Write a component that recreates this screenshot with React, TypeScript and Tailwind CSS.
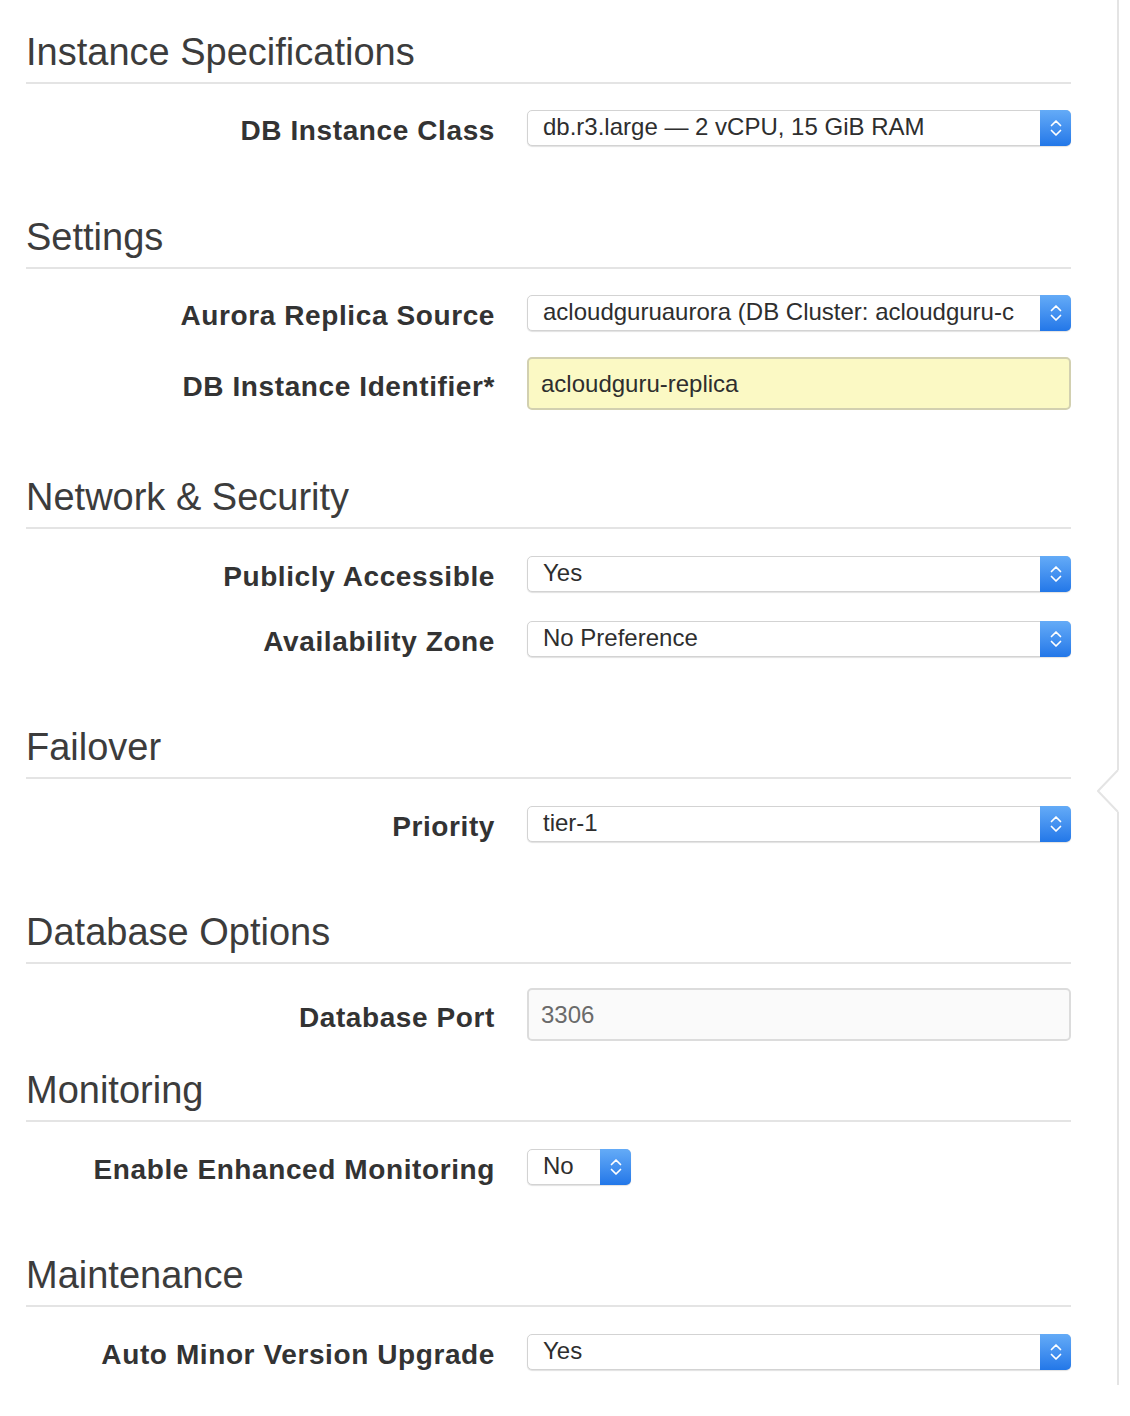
import React from "react";

const font = "font-['Liberation_Sans',Arial,Helvetica,sans-serif]";

function Header({ title, mt }: { title: string; mt: string }) {
  return (
    <div className={`${mt} border-b-2 border-[#e4e4e4] pb-[10px]`}>
      <h2 className="text-[38px] leading-[40px] font-normal text-[#3c3c3c]">{title}</h2>
    </div>
  );
}

function Stepper() {
  return (
    <div className="-my-px -mr-px flex w-[31px] items-center justify-center self-stretch rounded-r-[5px] bg-linear-to-b from-[#64abf7] to-[#2277e8]">
      <svg width="14" height="24" viewBox="0 0 14 24" fill="none">
        <path d="M2.5 9.5 L7 5 L11.5 9.5" stroke="white" strokeWidth="1.7" strokeLinecap="round" strokeLinejoin="round" />
        <path d="M2.5 14.5 L7 19 L11.5 14.5" stroke="white" strokeWidth="1.7" strokeLinecap="round" strokeLinejoin="round" />
      </svg>
    </div>
  );
}

function Select({ value, small }: { value: string; small?: boolean }) {
  return (
    <div
      className={`flex h-[36px] items-stretch rounded-[5px] border border-[#d3d3d3] bg-white shadow-[0_1px_1px_rgba(0,0,0,0.12)] ${
        small ? "w-[104px]" : "w-full"
      }`}
    >
      <div className="flex min-w-0 flex-1 items-center overflow-hidden whitespace-nowrap pb-[2px] pl-[15px] pr-[8px] text-[24px] leading-none text-[#2e2e2e]">
        {value}
      </div>
      <Stepper />
    </div>
  );
}

function TextInput({ value, yellow }: { value: string; yellow?: boolean }) {
  return (
    <div
      className={`flex h-[53px] w-full items-center rounded-[5px] border-2 pl-[12px] text-[24px] leading-none ${
        yellow
          ? "border-[#d2d0b0] bg-[#fbf9c4] text-[#2e2e2e]"
          : "border-[#dcdcdc] bg-[#fafafa] text-[#6a6a6a]"
      }`}
    >
      {value}
    </div>
  );
}

function Row({ label, mt, children }: { label: string; mt: string; children: React.ReactNode }) {
  return (
    <div className={`${mt} flex items-center`}>
      <div className="w-[469px] shrink-0 pt-[6px] text-right text-[28px] font-bold leading-[30px] tracking-[0.6px] text-[#333333]">
        {label}
      </div>
      <div className="ml-[32px] flex w-[544px] shrink-0">{children}</div>
    </div>
  );
}

export default function App() {
  return (
    <div className={`${font} flex h-[1416px] w-[1130px] bg-white`}>
      <div className="w-[1097px] shrink-0 pl-[26px]">
        <div className="w-[1045px]">
          <Header title="Instance Specifications" mt="mt-[32px]" />
          <Row label="DB Instance Class" mt="mt-[26px]">
            <Select value="db.r3.large — 2 vCPU, 15 GiB RAM" />
          </Row>

          <Header title="Settings" mt="mt-[71px]" />
          <Row label="Aurora Replica Source" mt="mt-[26px]">
            <Select value="acloudguruaurora (DB Cluster: acloudguru-c" />
          </Row>
          <Row label="DB Instance Identifier*" mt="mt-[26px]">
            <TextInput value="acloudguru-replica" yellow />
          </Row>

          <Header title="Network & Security" mt="mt-[67px]" />
          <Row label="Publicly Accessible" mt="mt-[27px]">
            <Select value="Yes" />
          </Row>
          <Row label="Availability Zone" mt="mt-[29px]">
            <Select value="No Preference" />
          </Row>

          <Header title="Failover" mt="mt-[70px]" />
          <Row label="Priority" mt="mt-[27px]">
            <Select value="tier-1" />
          </Row>

          <Header title="Database Options" mt="mt-[70px]" />
          <Row label="Database Port" mt="mt-[24px]">
            <TextInput value="3306" />
          </Row>

          <Header title="Monitoring" mt="mt-[29px]" />
          <Row label="Enable Enhanced Monitoring" mt="mt-[27px]">
            <Select value="No" small />
          </Row>

          <Header title="Maintenance" mt="mt-[70px]" />
          <Row label="Auto Minor Version Upgrade" mt="mt-[27px]">
            <Select value="Yes" />
          </Row>
        </div>
      </div>
      <div className="flex w-[22px] shrink-0 flex-col">
        <div className="ml-auto h-[770px] w-[2px] bg-[#e4e4e4]" />
        <svg width="22" height="42" viewBox="0 0 22 42" fill="none" className="block">
          <polyline points="21,0 1,21 21,42" stroke="#e4e4e4" strokeWidth="2" fill="none" />
        </svg>
        <div className="ml-auto h-[573px] w-[2px] bg-[#e4e4e4]" />
      </div>
    </div>
  );
}
